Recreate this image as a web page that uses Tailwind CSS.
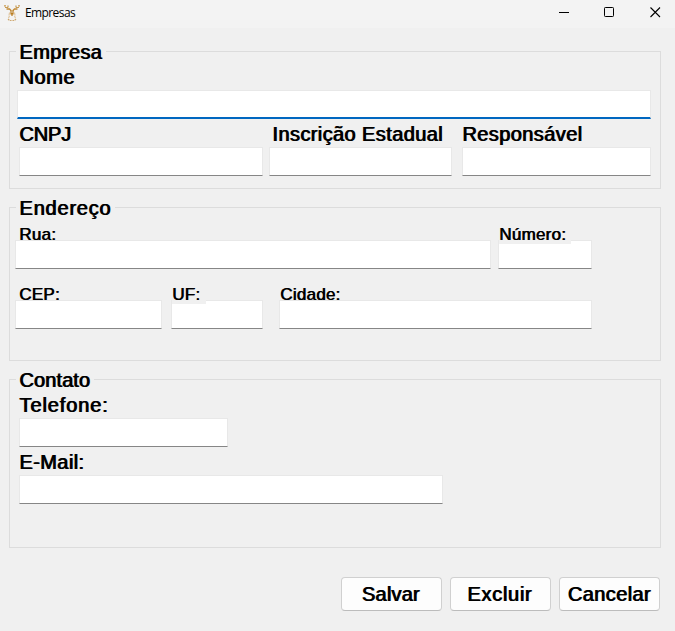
<!DOCTYPE html>
<html lang="pt-BR">
<head>
<meta charset="utf-8">
<title>Empresas</title>
<script src="https://cdn.jsdelivr.net/npm/@tailwindcss/browser@4"></script>
</head>
<body class="w-[675px] h-[631px] overflow-hidden bg-[#f0f0f0] text-black font-['Liberation_Sans',sans-serif] text-[20px] leading-6 tracking-[0.4px]">
<header class="flex h-7 items-start justify-between bg-[#f3f3f3] tracking-normal">
  <div class="flex items-center pl-1 pt-1">
    <svg class="mr-[5px]" width="16" height="17" viewBox="0 0 16 17" fill="none">
      <path d="M0 .8h2M1 2.500h3M4 .6v2M12 .6v2M12 2.500h3M14 .8h2" stroke="#c79a50" stroke-width="1.2"/>
      <path d="M2.500 4h3l1.500 1.500M13.500 4h-3L9 5.500" stroke="#c28a35" stroke-width="1.3"/>
      <path d="M7 5v4.500M9 5v4.500M8 8v3" stroke="#b97c20" stroke-width="1.2"/>
      <path d="M5.500 7.500l-.5 3M10.500 7.500l.5 3M5.500 11l-1 2M10.500 11l1 2" stroke="#dfc298" stroke-width="1.1"/>
      <path d="M4 14l1.500 1.500h2M12 14l-1.500 1.500h-2" stroke="#cda468" stroke-width="1.2" stroke-dasharray="2 .7"/>
    </svg>
    <span class="font-['Open_Sans',sans-serif] text-[12px] leading-[18px] tracking-[-0.6px]">Empresas</span>
  </div>
  <div class="flex gap-[35px] pr-[14px] pt-[7px]">
    <svg width="10" height="11" viewBox="0 0 10 11"><path d="M0 5.5h10" stroke="#000"/></svg>
    <svg width="10" height="11" viewBox="0 0 10 11" fill="none"><rect x=".5" y=".5" width="9" height="9" rx=".8" stroke="#000"/></svg>
    <svg class="ml-px" width="11" height="11" viewBox="0 0 11 11"><path d="M.5.5l9.500 9.500M10 .5L.5 10" stroke="#000" stroke-width="1.1"/></svg>
  </div>
</header>
<main class="px-[9px] pt-[23px] [text-shadow:1px_0_0_#000]">
  <section class="h-[138px] w-[652px] border border-[#dcdcdc]">
    <h2 class="-mt-3 ml-[6px] h-[25px] w-[90px] bg-[#f0f0f0] pl-[3px]">Empresa</h2>
    <label class="ml-[9px] block h-[25px] tracking-[0.6px]">Nome</label>
    <div class="ml-[7px] h-[29px] w-[634px] border border-b-2 border-[#e8e8e8] border-b-[#0067c0] bg-white"></div>
    <div class="flex pl-[9px] pt-[3px]">
      <div class="w-[250px]"><label class="block h-[25px] tracking-[-0.2px]">CNPJ</label><div class="h-[29px] w-[244px] border border-[#e8e8e8] border-b-[#868686] bg-white"></div></div>
      <div class="w-[193px]"><label class="block h-[25px] pl-[3px]">Inscrição Estadual</label><div class="h-[29px] w-[183px] border border-[#e8e8e8] border-b-[#868686] bg-white"></div></div>
      <div><label class="block h-[25px]">Responsável</label><div class="h-[29px] w-[189px] border border-[#e8e8e8] border-b-[#868686] bg-white"></div></div>
    </div>
  </section>
  <section class="mt-[18px] h-[154px] w-[652px] border border-[#dcdcdc]">
    <h2 class="-mt-3 ml-[6px] h-[29px] w-[99px] bg-[#f0f0f0] pl-[3px] tracking-[0.8px]">Endereço</h2>
    <div class="flex pl-[5px] text-[17px] leading-5 tracking-[0.25px] [text-shadow:0.7px_0_0_#000]">
      <div class="w-[483px]"><label class="ml-1 block h-[15px]">Rua:</label><div class="relative h-[29px] w-[476px] border border-[#e8e8e8] border-b-[#868686] bg-white"></div></div>
      <div><label class="relative z-10 -mb-1 ml-px block h-[19px] w-[72px] bg-[#f0f0f0]">Número:</label><div class="h-[29px] w-[94px] border border-[#e8e8e8] border-b-[#868686] bg-white"></div></div>
    </div>
    <div class="flex pl-[5px] pt-4 text-[17px] leading-5 tracking-[0.25px] [text-shadow:0.7px_0_0_#000]">
      <div class="w-[156px]"><label class="ml-1 block h-[15px]">CEP:</label><div class="relative h-[29px] w-[147px] border border-[#e8e8e8] border-b-[#868686] bg-white"></div></div>
      <div class="w-[108px]"><label class="relative z-10 -mb-1 ml-px block h-[19px] w-[34px] bg-[#f0f0f0]">UF:</label><div class="h-[29px] w-[92px] border border-[#e8e8e8] border-b-[#868686] bg-white"></div></div>
      <div><label class="ml-px block h-[15px]">Cidade:</label><div class="relative h-[29px] w-[313px] border border-[#e8e8e8] border-b-[#868686] bg-white"></div></div>
    </div>
  </section>
  <section class="mt-[18px] h-[169px] w-[652px] border border-[#dcdcdc]">
    <h2 class="-mt-3 ml-[6px] h-[25px] w-[78px] bg-[#f0f0f0] pl-[3px] tracking-[0.1px]">Contato</h2>
    <div class="pl-[9px]">
      <label class="block h-[25px] tracking-[0.9px]">Telefone:</label>
      <div class="h-[29px] w-[209px] border border-[#e8e8e8] border-b-[#868686] bg-white"></div>
      <label class="mt-[3px] block h-[25px]">E-Mail:</label>
      <div class="h-[29px] w-[424px] border border-[#e8e8e8] border-b-[#868686] bg-white"></div>
    </div>
  </section>
  <div class="mt-[29px] flex justify-end gap-2 pr-[6px]">
    <button class="h-[34px] w-[101px] rounded-[4px] border border-[#d0d0d0] border-b-[#bcbcbc] bg-[#fdfdfd] pr-0.5 [text-shadow:1px_0_0_#000] tracking-[0.2px]">Salvar</button>
    <button class="h-[34px] w-[101px] rounded-[4px] border border-[#d0d0d0] border-b-[#bcbcbc] bg-[#fdfdfd] pr-0.5 [text-shadow:1px_0_0_#000] tracking-[0.7px]">Excluir</button>
    <button class="h-[34px] w-[101px] rounded-[4px] border border-[#d0d0d0] border-b-[#bcbcbc] bg-[#fdfdfd] pr-px [text-shadow:1px_0_0_#000]">Cancelar</button>
  </div>
</main>
</body>
</html>
